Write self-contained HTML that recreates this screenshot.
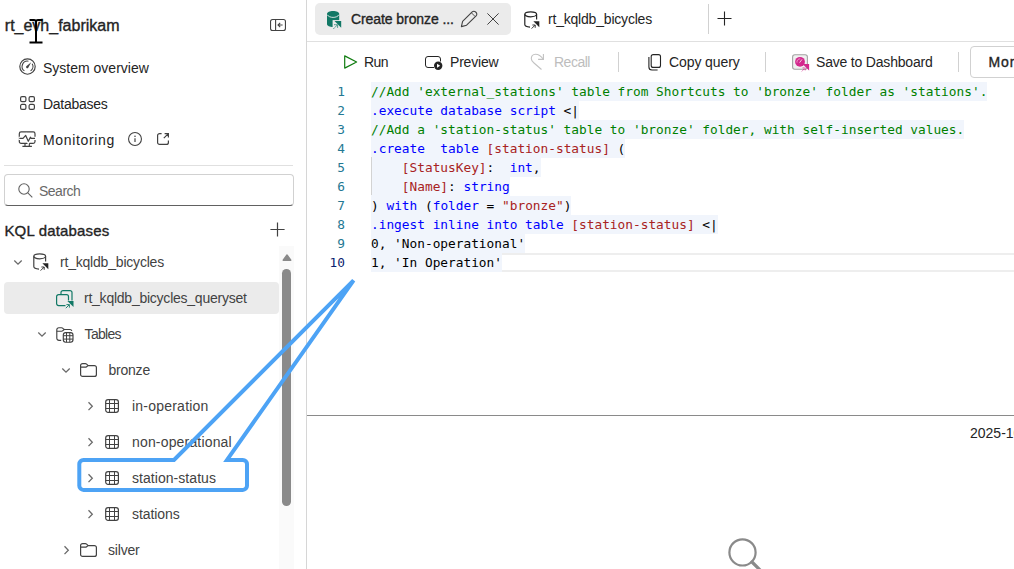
<!DOCTYPE html>
<html lang="en">
<head>
<meta charset="utf-8">
<title>rt_evh_fabrikam - KQL queryset</title>
<style>
  html, body { margin: 0; padding: 0; }
  body {
    width: 1014px; height: 569px; overflow: hidden; position: relative;
    background: #ffffff; color: #242424;
    font-family: "Liberation Sans", sans-serif; font-size: 14px;
  }
  * { box-sizing: border-box; }
  .abs { position: absolute; }
  svg { display: block; overflow: visible; }

  /* ---------- sidebar ---------- */
  #sidebar { position: absolute; left: 0; top: 0; width: 307px; height: 569px; background: #fff; border-right: 1px solid #d6d6d6; }
  .t { position: absolute; white-space: nowrap; line-height: 20px; height: 20px; color: #242424; }
  .semi { -webkit-text-stroke: 0.35px #242424; }
  #title { left: 4.8px; top: 16px; font-size: 16px; }
  .nav { font-size: 14px; left: 43px; }
  #hr1 { position: absolute; left: 4px; top: 165px; width: 289px; height: 1px; background: #e0e0e0; }
  #search { position: absolute; left: 4px; top: 174px; width: 290px; height: 32px; border: 1px solid #d1d1d1; border-bottom-color: #616161; border-radius: 4px; background: #fff; }
  #search .t { left: 34px; top: 5.6px; color: #686868; font-size: 14px; letter-spacing: -0.5px; }
  #kql { left: 4.4px; top: 221px; font-size: 15px; letter-spacing: 0.17px; }
  .row { position: absolute; left: 4px; width: 275px; height: 36px; }
  .row.sel::before { content: ""; position: absolute; left: 0; top: 2px; width: 275px; height: 32px; background: #ebebeb; border-radius: 4px; }
  .tr { font-size: 14px; color: #424242; }
  .ico { position: absolute; }

  /* scrollbar */
  #sbtrack { position: absolute; left: 279.3px; top: 246px; width: 14.6px; height: 323px; background: #fafafa; }
  #sbthumb { position: absolute; left: 282.1px; top: 268.8px; width: 8.8px; height: 237px; background: #8a8a8a; border-radius: 4.4px; }

  /* ---------- main ---------- */
  #main { position: absolute; left: 307px; top: 0; width: 707px; height: 569px; background: #fff; }
  #tabline { position: absolute; left: 0; top: 41px; width: 707px; height: 1px; background: #e0e0e0; }
  #tab1 { position: absolute; left: 8px; top: 3px; width: 196px; height: 32px; background: #ebebeb; border-radius: 5px; }
  .tabt { font-size: 14px; top: 9px; }
  .tb { font-size: 14px; top: 52px; color: #242424; }
  .vsep { position: absolute; width: 1px; background: #d1d1d1; }
  #more { position: absolute; left: 663px; top: 46px; width: 60px; height: 32px; border: 1px solid #d1d1d1; border-radius: 4px; background: #fff; }

  /* editor */
  #editor { position: absolute; left: 0; top: 82px; width: 707px; height: 190px; font-family: "DejaVu Sans Mono", "Liberation Mono", monospace; font-size: 12.8px; }
  .ln { position: absolute; left: 0; width: 38px; text-align: right; height: 19px; line-height: 19px; color: #237893; white-space: pre; }
  .ln.act { color: #0b216f; }
  .cl { position: absolute; left: 64px; height: 19px; line-height: 19px; white-space: pre; color: #000; }
  .cm { color: #008000; }
  .kw { color: #0000ff; }
  .st { color: #a82222; }
  .hl { background: #f1f5fc; display: inline-block; height: 19px; }
  #curline { position: absolute; left: 64px; top: 171px; width: 650px; height: 19px; border: 2px solid #eeeeee; border-left: 0; }
  #guide { position: absolute; left: 64px; top: 75px; width: 1px; height: 38px; background: #d3d3d3; z-index: 2; }
  #resline { position: absolute; left: 0; top: 415px; width: 707px; height: 1px; background: #8a8a8a; }
</style>
</head>
<body>

<div id="sidebar">
  <div id="title" class="t semi m">rt_evh_fabrikam</div>
  <svg class="ico" style="left:270px;top:19px" width="16" height="12" viewBox="0 0 16 12" fill="none" stroke="#424242" stroke-width="1.1"><rect x="0.55" y="0.55" width="14.9" height="10.9" rx="2"/><path d="M5.6 0.5V11.5"/><path d="M12.6 6H8M10.2 3.8L8 6L10.2 8.2"/></svg>

  <svg class="ico" style="left:18.5px;top:58.4px" width="17" height="17" viewBox="0 0 17 17" fill="none" stroke="#424242"><circle cx="8.5" cy="8.5" r="7.7" stroke-width="1.15"/><path d="M5.4 12.92A5.4 5.4 0 0 1 9.44 3.18M13.18 5.8A5.4 5.4 0 0 1 11.6 12.92" stroke-width="1.1"/><path d="M12.2 4.3L7.3 8.3A1.25 1.25 0 0 0 9.1 10Z" fill="#424242" stroke="none"/></svg>
  <div class="t nav m" style="top:57.5px">System overview</div>

  <svg class="ico" style="left:19.5px;top:96px" width="15" height="14" viewBox="0 0 15 14" fill="none" stroke="#424242" stroke-width="1.2"><rect x="0.6" y="0.6" width="5.3" height="5" rx="1.4"/><rect x="9.1" y="0.6" width="5.3" height="5" rx="1.4"/><rect x="0.6" y="8.4" width="5.3" height="5" rx="1.4"/><rect x="9.1" y="8.4" width="5.3" height="5" rx="1.4"/></svg>
  <div class="t nav m" style="top:93.5px;letter-spacing:-0.28px">Databases</div>

  <svg class="ico" style="left:19px;top:131px" width="17" height="16" viewBox="0 0 17 16" fill="none" stroke="#424242" stroke-width="1.2"><rect x="0.3" y="0.9" width="15.7" height="11.4" rx="1.8"/><path d="M3.4 15.3H12.9M6 12.3V15.3M10.3 12.3V15.3"/><path d="M-0.6 7.3H4L6.7 4.4L9.3 10.3L11.4 6.2L12.2 7.3H17" stroke="#fff" stroke-width="3.2"/><path d="M0.3 7.3H4L6.7 4.4L9.3 10.3L11.4 6.2L12.2 7.3H16" stroke-linejoin="round"/></svg>
  <div class="t nav m" style="top:129.5px;letter-spacing:0.66px">Monitoring</div>
  <svg class="ico" style="left:128px;top:132px" width="14" height="14" viewBox="0 0 14 14"><circle cx="7" cy="7" r="6.45" fill="none" stroke="#424242" stroke-width="1.1"/><path d="M7 6.2V9.9" stroke="#424242" stroke-width="1.2" fill="none"/><circle cx="7" cy="4.3" r="0.8" fill="#424242"/></svg>
  <svg class="ico" style="left:157px;top:133px" width="12" height="12" viewBox="0 0 12 12" fill="none" stroke="#424242" stroke-width="1.2"><path d="M4.6 0.6H2.6A2 2 0 0 0 0.6 2.6V9.4A2 2 0 0 0 2.6 11.4H9.4A2 2 0 0 0 11.4 9.4V7.4"/><path d="M7.6 0.6H11.4V4.4M11.4 0.6L6.8 5.2"/></svg>

  <div id="hr1"></div>
  <div id="search">
    <svg class="ico" style="left:13px;top:7.6px" width="15" height="15" viewBox="0 0 15 15" fill="none" stroke="#616161" stroke-width="1.1"><circle cx="6" cy="6" r="5.2"/><path d="M9.8 9.8L14.3 14.3"/></svg>
    <div class="t m">Search</div>
  </div>

  <div id="kql" class="t semi m">KQL databases</div>
  <svg class="ico" style="left:270.4px;top:222.4px" width="15" height="15" viewBox="0 0 15 15"><path d="M7.5 0.4V14.6M0.4 7.5H14.6" stroke="#424242" stroke-width="1.2" fill="none"/></svg>

  <div id="sbtrack"></div>
  <div class="row" style="top:244px"></div>
  <svg class="ico" style="left:14.100000000000001px;top:260.0px" width="8" height="5" viewBox="0 0 8 5"><path d="M0.3 0.5L4 4.2L7.7 0.5" fill="none" stroke="#6a6a6a" stroke-width="1.3"/></svg>
  <svg class="ico" style="left:33px;top:253.3px" width="16" height="18" viewBox="0 0 16 18" fill="none" stroke="#424242" stroke-width="1.2"><ellipse cx="6.7" cy="3.3" rx="5.9" ry="2.5"/><path d="M0.8 3.3V13.6C0.8 15 3.2 16 6 16.1M12.6 3.3V8.6"/><path d="M9.4 10.3H15.3V16.2Z" fill="#242424" stroke="none"/><path d="M7.6 17.6L11 14.2M8.4 14H11.2V16.8" stroke="#242424" stroke-width="0.9"/></svg>
  <div class="t tr m" style="left:60px;top:252px;letter-spacing:-0.2px">rt_kqldb_bicycles</div>
  <div class="row sel" style="top:280px"></div>
  <svg class="ico" style="left:55.5px;top:289.5px" width="18" height="18" viewBox="0 0 18 18" fill="none" stroke="#117865" stroke-width="1.2"><path d="M5 4.5V2.6A2 2 0 0 1 7 0.6H14A2 2 0 0 1 16 2.6V10.5"/><path d="M9.5 15.6H2.6A2 2 0 0 1 0.6 13.6V6.7A2 2 0 0 1 2.6 4.7H10.5A2 2 0 0 1 12.5 6.7V10.5"/><path d="M11.4 11H17.5V17.1Z" fill="#117865" stroke="none"/><path d="M9.8 18.2L13.2 14.8M10.4 14.6H13.4V17.6" stroke-width="0.9"/></svg>
  <div class="t tr m" style="left:84px;top:288px;letter-spacing:-0.24px">rt_kqldb_bicycles_queryset</div>
  <div class="row" style="top:316px"></div>
  <svg class="ico" style="left:38.2px;top:332.0px" width="8" height="5" viewBox="0 0 8 5"><path d="M0.3 0.5L4 4.2L7.7 0.5" fill="none" stroke="#6a6a6a" stroke-width="1.3"/></svg>
  <svg class="ico" style="left:55.5px;top:327px" width="18" height="16" viewBox="0 0 18 16" fill="none" stroke="#424242" stroke-width="1.15"><path d="M5.2 13.4H3A2.2 2.2 0 0 1 0.8 11.2V2.7A2 2 0 0 1 2.8 0.7H5.5A2 2 0 0 1 6.9 1.3L8.2 2.5H13.9A1.9 1.9 0 0 1 15.8 4"/><path d="M0.8 4.2H5.5A2 2 0 0 0 6.9 3.6L8.2 2.5"/><rect x="7.3" y="5.6" width="9.7" height="9.6" rx="2.4"/><path d="M7.3 8.7H17M7.3 12.1H17M10.5 5.6V15.2M13.8 5.6V15.2" stroke-width="1"/></svg>
  <div class="t tr m" style="left:84.6px;top:324px;letter-spacing:-0.7px">Tables</div>
  <div class="row" style="top:352px"></div>
  <svg class="ico" style="left:62.2px;top:368.0px" width="8" height="5" viewBox="0 0 8 5"><path d="M0.3 0.5L4 4.2L7.7 0.5" fill="none" stroke="#6a6a6a" stroke-width="1.3"/></svg>
  <svg class="ico" style="left:79.6px;top:363.2px" width="17" height="14" viewBox="0 0 17 14" fill="none" stroke="#424242" stroke-width="1.2"><path d="M0.6 4.2V11.4A2 2 0 0 0 2.6 13.4H14.4A2 2 0 0 0 16.4 11.4V4.6A2 2 0 0 0 14.4 2.6H8.2L6.6 1.1A2 2 0 0 0 5.3 0.6H2.6A2 2 0 0 0 0.6 2.6V4.2H5.3A2 2 0 0 0 6.6 3.7L8.2 2.6"/></svg>
  <div class="t tr m" style="left:108.4px;top:360px;letter-spacing:-0.2px">bronze</div>
  <div class="row" style="top:388px"></div>
  <svg class="ico" style="left:88.3px;top:402.0px" width="5" height="8.4" viewBox="0 0 5 8.4"><path d="M0.5 0.3L4.3 4.2L0.5 8.1" fill="none" stroke="#6a6a6a" stroke-width="1.3"/></svg>
  <svg class="ico" style="left:105px;top:399px" width="14" height="14" viewBox="0 0 14 14" fill="none" stroke="#424242" stroke-width="1.2"><rect x="0.7" y="0.6" width="12.7" height="12.8" rx="2.4"/><path d="M0.7 4.5H13.4M0.7 9.5H13.4M4.5 0.6V13.4M9.5 0.6V13.4" stroke-width="1"/></svg>
  <div class="t tr m" style="left:132px;top:396px;letter-spacing:0.22px">in-operation</div>
  <div class="row" style="top:424px"></div>
  <svg class="ico" style="left:88.3px;top:438.0px" width="5" height="8.4" viewBox="0 0 5 8.4"><path d="M0.5 0.3L4.3 4.2L0.5 8.1" fill="none" stroke="#6a6a6a" stroke-width="1.3"/></svg>
  <svg class="ico" style="left:105px;top:435px" width="14" height="14" viewBox="0 0 14 14" fill="none" stroke="#424242" stroke-width="1.2"><rect x="0.7" y="0.6" width="12.7" height="12.8" rx="2.4"/><path d="M0.7 4.5H13.4M0.7 9.5H13.4M4.5 0.6V13.4M9.5 0.6V13.4" stroke-width="1"/></svg>
  <div class="t tr m" style="left:132px;top:432px;letter-spacing:0.17px">non-operational</div>
  <div class="row" style="top:460px"></div>
  <svg class="ico" style="left:88.3px;top:474.0px" width="5" height="8.4" viewBox="0 0 5 8.4"><path d="M0.5 0.3L4.3 4.2L0.5 8.1" fill="none" stroke="#6a6a6a" stroke-width="1.3"/></svg>
  <svg class="ico" style="left:105px;top:471px" width="14" height="14" viewBox="0 0 14 14" fill="none" stroke="#424242" stroke-width="1.2"><rect x="0.7" y="0.6" width="12.7" height="12.8" rx="2.4"/><path d="M0.7 4.5H13.4M0.7 9.5H13.4M4.5 0.6V13.4M9.5 0.6V13.4" stroke-width="1"/></svg>
  <div class="t tr m" style="left:132px;top:468px;letter-spacing:0.05px">station-status</div>
  <div class="row" style="top:496px"></div>
  <svg class="ico" style="left:88.3px;top:510.00000000000006px" width="5" height="8.4" viewBox="0 0 5 8.4"><path d="M0.5 0.3L4.3 4.2L0.5 8.1" fill="none" stroke="#6a6a6a" stroke-width="1.3"/></svg>
  <svg class="ico" style="left:105px;top:507px" width="14" height="14" viewBox="0 0 14 14" fill="none" stroke="#424242" stroke-width="1.2"><rect x="0.7" y="0.6" width="12.7" height="12.8" rx="2.4"/><path d="M0.7 4.5H13.4M0.7 9.5H13.4M4.5 0.6V13.4M9.5 0.6V13.4" stroke-width="1"/></svg>
  <div class="t tr m" style="left:132px;top:504px;letter-spacing:-0.08px">stations</div>
  <div class="row" style="top:532px"></div>
  <svg class="ico" style="left:64.3px;top:546.0px" width="5" height="8.4" viewBox="0 0 5 8.4"><path d="M0.5 0.3L4.3 4.2L0.5 8.1" fill="none" stroke="#6a6a6a" stroke-width="1.3"/></svg>
  <svg class="ico" style="left:79.6px;top:543.2px" width="17" height="14" viewBox="0 0 17 14" fill="none" stroke="#424242" stroke-width="1.2"><path d="M0.6 4.2V11.4A2 2 0 0 0 2.6 13.4H14.4A2 2 0 0 0 16.4 11.4V4.6A2 2 0 0 0 14.4 2.6H8.2L6.6 1.1A2 2 0 0 0 5.3 0.6H2.6A2 2 0 0 0 0.6 2.6V4.2H5.3A2 2 0 0 0 6.6 3.7L8.2 2.6"/></svg>
  <div class="t tr m" style="left:108px;top:540px;letter-spacing:-0.18px">silver</div>

  <svg class="ico" style="left:281.6px;top:253.8px" width="10" height="7" viewBox="0 0 10 7"><path d="M5 1L8.8 6.2H1.2Z" fill="#8a8a8a" stroke="#8a8a8a" stroke-width="1.4" stroke-linejoin="round"/></svg>
  <div id="sbthumb"></div>
</div>

<div id="main">
  <!-- tab strip -->
  <div id="tab1"></div>
  <svg class="ico" style="left:19.9px;top:10.8px" width="15" height="18" viewBox="0 0 15 18"><path d="M0 2.8C0 1.25 2.73 0 6.1 0S12.2 1.25 12.2 2.8V13.3C12.2 14.85 9.47 16.1 6.1 16.1S0 14.85 0 13.3Z" fill="#117865"/><path d="M0.2 3.7C1.2 5.5 3.7 6.4 6.1 6.4S11 5.5 12 3.7" fill="none" stroke="#ebebeb" stroke-width="0.9"/><path d="M5.6 9.1H15.1V17.9H5.6Z" fill="#ebebeb"/><path d="M7.5 10H14.2V16.7Z" fill="#117865"/><path d="M6.6 17.7L10.1 14.2M7.3 13.7H10.6V17" stroke="#117865" stroke-width="1" fill="none" stroke-dasharray="1.3 0.7"/></svg>
  <div class="t tabt semi m" style="left:44px;letter-spacing:-0.08px">Create bronze ...</div>
  <svg class="ico" style="left:154px;top:11px" width="17" height="16" viewBox="0 0 17 16" fill="none" stroke="#424242" stroke-width="1.1" stroke-linejoin="round"><path d="M0.4 15.6L1.6 10.4L11.2 0.9A2.3 2.3 0 0 1 14.5 0.9L15.1 1.5A2.3 2.3 0 0 1 15.1 4.8L5.6 14.2Z"/><path d="M10.5 1.9L14.1 5.5" stroke-width="0.9"/></svg>
  <svg class="ico" style="left:180px;top:13px" width="12" height="12" viewBox="0 0 12 12"><path d="M0.4 0.4L11.6 11.6M11.6 0.4L0.4 11.6" stroke="#424242" stroke-width="1" fill="none"/></svg>
  <svg class="ico" style="left:216.6px;top:10.5px" width="16" height="18" viewBox="0 0 16 18" fill="none" stroke="#242424" stroke-width="1.2"><ellipse cx="6.7" cy="3.3" rx="5.9" ry="2.5"/><path d="M0.8 3.3V13.6C0.8 15 3.2 16 6 16.1M12.6 3.3V8.6"/><path d="M9.4 10.3H15.3V16.2Z" fill="#242424" stroke="none"/><path d="M7.6 17.6L11 14.2M8.4 14H11.2V16.8" stroke="#242424" stroke-width="0.9"/></svg>
  <div class="t tabt m" style="left:241px;letter-spacing:-0.2px">rt_kqldb_bicycles</div>
  <div class="vsep" style="left:401px;top:4px;height:30px"></div>
  <svg class="ico" style="left:410px;top:11px" width="15" height="15" viewBox="0 0 15 15"><path d="M7.5 0.5V14.5M0.5 7.5H14.5" stroke="#242424" stroke-width="1.1" fill="none"/></svg>
  <div id="tabline"></div>

  <!-- toolbar -->
  <svg class="ico" style="left:35.5px;top:54.8px" width="14" height="14" viewBox="0 0 14 14"><path d="M1.7 0.9L13.6 7L1.7 13.1Z" fill="none" stroke="#107c10" stroke-width="1.2" stroke-linejoin="round"/></svg>
  <div class="t tb m" style="left:57px;letter-spacing:-0.6px">Run</div>
  <svg class="ico" style="left:118px;top:56px" width="18" height="14" viewBox="0 0 18 14" fill="none" stroke="#242424"><path d="M9 11.5H3A2.5 2.5 0 0 1 0.5 9V3A2.5 2.5 0 0 1 3 0.5H13A2.5 2.5 0 0 1 15.5 3V5.5"/><circle cx="13.2" cy="9.8" r="4.2" fill="#242424" stroke="none"/><path d="M12 7.8L15.2 9.8L12 11.8Z" fill="#fff" stroke="none"/></svg>
  <div class="t tb m" style="left:143px;letter-spacing:-0.2px">Preview</div>
  <svg class="ico" style="left:223px;top:53px" width="15" height="18" viewBox="0 0 15 18" fill="none" stroke="#c2c2c2" stroke-width="1.1"><path d="M13.4 0.9V6.4H8.1"/><path d="M13.4 6.4C11 3 8 1.3 5.5 1.3C2.5 1.3 1.3 3.5 1.3 5.8C1.3 7.5 2.5 8.8 4 10L11.5 16.5"/></svg>
  <div class="t tb m" style="left:247px;color:#bdbdbd;letter-spacing:-0.5px">Recall</div>
  <div class="vsep" style="left:311px;top:52px;height:20px"></div>
  <svg class="ico" style="left:340.6px;top:53.8px" width="14" height="17" viewBox="0 0 14 17" fill="none" stroke="#242424" stroke-width="1.1"><rect x="3.2" y="0.6" width="9.3" height="12.8" rx="2"/><path d="M0.9 3V13A3 3 0 0 0 3.9 16H9.6"/></svg>
  <div class="t tb m" style="left:362px;letter-spacing:-0.1px">Copy query</div>
  <div class="vsep" style="left:458px;top:52px;height:20px"></div>
  <svg class="ico" style="left:485px;top:54px" width="18" height="18" viewBox="0 0 18 18"><rect x="0.6" y="0.7" width="14.8" height="14.6" rx="2.2" fill="#f0f0f0" stroke="#a3a3a3" stroke-width="1.1"/><circle cx="8" cy="7.8" r="4.9" fill="#d3288d"/><path d="M5 8.6A3 3 0 0 1 8.4 4.9" fill="none" stroke="#f1a8d3" stroke-width="0.8"/><path d="M7.6 8.6L10 5.4" stroke="#f6c6e3" stroke-width="1"/><path d="M10.5 10H17.1V16.6Z" fill="#d3288d"/><path d="M9.9 17.3L12.8 14.4M10.6 13.9H13.2V16.5" stroke="#d3288d" stroke-width="0.9" fill="none" stroke-dasharray="1.2 0.7"/></svg>
  <div class="t tb m" style="left:509px;letter-spacing:-0.19px">Save to Dashboard</div>
  <div class="vsep" style="left:651px;top:52px;height:20px"></div>
  <div id="more"></div>
  <div class="t tb semi m" style="left:681.4px;letter-spacing:0.9px">More</div>

  <!-- editor -->
  <div id="editor">
    <div id="curline"></div>
    <div id="guide"></div>
    <div class="ln" style="top:-0.5px">1</div><div class="cl" style="top:-0.5px"><span class="hl"><span class="cm">//Add 'external_stations' table from Shortcuts to 'bronze' folder as 'stations'.</span></span></div>
    <div class="ln" style="top:18.5px">2</div><div class="cl" style="top:18.5px"><span class="hl"><span class="kw">.execute database script</span> &lt;|</span></div>
    <div class="ln" style="top:37.5px">3</div><div class="cl" style="top:37.5px"><span class="hl"><span class="cm">//Add a 'station-status' table to 'bronze' folder, with self-inserted values.</span></span></div>
    <div class="ln" style="top:56.5px">4</div><div class="cl" style="top:56.5px"><span class="hl"><span class="kw">.create  table</span> <span class="st">[station-status]</span> (</span></div>
    <div class="ln" style="top:75.5px">5</div><div class="cl" style="top:75.5px"><span class="hl">    <span class="st">[StatusKey]</span>:  <span class="kw">int</span>,</span></div>
    <div class="ln" style="top:94.5px">6</div><div class="cl" style="top:94.5px"><span class="hl">    <span class="st">[Name]</span>: <span class="kw">string</span></span></div>
    <div class="ln" style="top:113.5px">7</div><div class="cl" style="top:113.5px"><span class="hl">) <span class="kw">with</span> (<span class="kw">folder</span> = <span class="st">"bronze"</span>)</span></div>
    <div class="ln" style="top:132.5px">8</div><div class="cl" style="top:132.5px"><span class="hl"><span class="kw">.ingest inline into table</span> <span class="st">[station-status]</span> &lt;|</span></div>
    <div class="ln" style="top:151.5px">9</div><div class="cl" style="top:151.5px"><span class="hl">0, 'Non-operational'</span></div>
    <div class="ln act" style="top:170.5px">10</div><div class="cl" style="top:170.5px"><span class="hl">1, 'In Operation'</span></div>
  </div>

  <!-- results -->
  <div id="resline"></div>
  <div class="t m" style="left:663px;top:423px;font-size:14px;">2025-10-</div>
  <svg class="ico" style="left:420.6px;top:538.2px" width="35" height="35" viewBox="0 0 35 35" fill="none" stroke="#8a8a8a"><circle cx="14.5" cy="14.4" r="13.1" stroke-width="2.2"/><path d="M24 24L34 34" stroke-width="3.2" stroke-linecap="round"/></svg>
</div>

<!-- annotation callout -->
<svg id="callout" class="abs" style="left:0;top:0" width="1014" height="569" viewBox="0 0 1014 569"><path d="M174 459.9H83.5A4.2 4.2 0 0 0 79.3 464.1V485.7A4.2 4.2 0 0 0 83.5 489.9H242.8A4.2 4.2 0 0 0 247 485.7V464.1A4.2 4.2 0 0 0 242.8 459.9H227L353.6 280.4Z" fill="none" stroke="#4da3f5" stroke-width="4" stroke-linejoin="miter" stroke-miterlimit="10"/></svg>

<!-- mouse I-beam -->
<svg class="abs" style="left:29px;top:19px" width="14" height="25" viewBox="0 0 14 25" fill="none" stroke="#000" stroke-width="2"><path d="M0.5 1H5C6.3 1 7 1.8 7 3C7 1.8 7.7 1 9 1H13.5M7 2.5V22.5M0.5 23.5H13.5"/></svg>

</body>
</html>
